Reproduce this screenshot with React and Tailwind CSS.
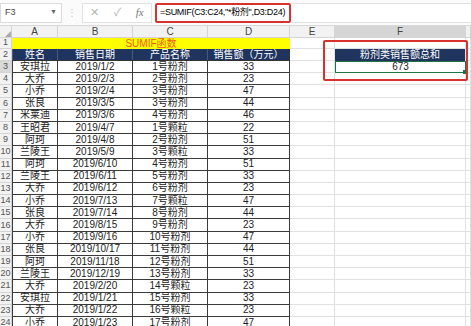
import React from "react";

const data = [
  ["安琪拉", "2019/1/2", "1号粉剂", 33],
  ["大乔", "2019/2/3", "2号粉剂", 23],
  ["小乔", "2019/2/4", "3号粉剂", 47],
  ["张良", "2019/3/5", "3号粉剂", 44],
  ["米莱迪", "2019/3/6", "4号粉剂", 46],
  ["王昭君", "2019/4/7", "1号颗粒", 22],
  ["阿珂", "2019/4/8", "2号粉剂", 51],
  ["兰陵王", "2019/5/9", "3号颗粒", 33],
  ["阿珂", "2019/6/10", "4号粉剂", 51],
  ["兰陵王", "2019/6/11", "5号粉剂", 33],
  ["大乔", "2019/6/12", "6号粉剂", 23],
  ["小乔", "2019/7/13", "7号颗粒", 47],
  ["张良", "2019/7/14", "8号粉剂", 44],
  ["大乔", "2019/8/15", "9号粉剂", 23],
  ["小乔", "2019/9/16", "10号粉剂", 47],
  ["张良", "2019/10/17", "11号粉剂", 44],
  ["阿珂", "2019/11/18", "12号粉剂", 51],
  ["兰陵王", "2019/12/19", "13号粉剂", 33],
  ["大乔", "2019/2/20", "14号颗粒", 23],
  ["安琪拉", "2019/1/21", "15号粉剂", 33],
  ["大乔", "2019/1/22", "16号颗粒", 23],
  ["小乔", "2019/1/23", "17号粉剂", 47],
];

const RowNum = ({ n, active }) => (
  <div
    className={`w-[12px] shrink-0 flex items-center justify-center border-r border-b border-[#d4d4d4] text-[9px] text-[#555] ${
      active ? "bg-[#d9d9d9]" : "bg-[#f2f2f2]"
    }`}
  >
    {n}
  </div>
);

const Blank = ({ w }) => <div className={`${w} shrink-0 border-r border-b border-[#e1e1e1]`} />;

const App = () => {
  return (
    <div className="relative w-[471px] h-[326px] overflow-hidden bg-white text-[#222] font-['Liberation_Sans','Noto_Sans_CJK_SC',sans-serif]">
      {/* formula bar */}
      <div className="flex items-center h-[26px] border-b border-[#d8d8d8] bg-[#fbfbfb]">
        <div className="w-[62px] h-[20px] flex items-center justify-between px-1 bg-white border border-[#dcdcdc] text-[9px] text-[#444]">
          <span>F3</span>
          <span className="text-[7px] text-[#666]">▼</span>
        </div>
        <div className="w-[20px] text-center text-[10px] text-[#c4c4c4]">⋮</div>
        <div className="w-[70px] h-[20px] flex items-center justify-around bg-white border border-[#e2e2e2] text-[11px] text-[#b5b5b5]">
          <span>✕</span>
          <span>✓</span>
          <span className="italic font-['Liberation_Serif',serif] text-[#777]">fx</span>
        </div>
        <div className="ml-[3px] w-[136px] h-[20px] flex items-center px-[3px] bg-white border-2 border-[#d8322e] rounded-[2px] text-[9px] tracking-[-0.3px] text-black whitespace-nowrap overflow-hidden">
          =SUMIF(C3:C24,"*粉剂",D3:D24)
        </div>
        <div className="flex-1 h-[20px] bg-white border-y border-[#e2e2e2]" />
      </div>

      {/* column letters */}
      <div className="flex h-[12px] bg-[#f2f2f2] text-[10px] text-[#444]">
        <div className="w-[12px] shrink-0 border-r border-b border-[#d4d4d4] flex items-end justify-end">
          <span className="text-[6px] text-[#aaa] leading-none">◢</span>
        </div>
        {[
          ["A", "w-[46px]"],
          ["B", "w-[75px]"],
          ["C", "w-[75px]"],
          ["D", "w-[82px]"],
          ["E", "w-[45px]"],
          ["F", "w-[131px]"],
          ["", "flex-1"],
        ].map(([l, w]) => (
          <div
            key={l}
            className={`${w} shrink-0 flex items-center justify-center border-r border-b border-[#d4d4d4] leading-none ${
              l === "F" ? "bg-[#d6d6d6]" : ""
            }`}
          >
            {l}
          </div>
        ))}
      </div>

      {/* row 1 */}
      <div className="flex h-[11px]">
        <RowNum n={1} />
        <div className="w-[278px] shrink-0 flex items-center justify-center bg-[#ffff00] text-[10px] leading-none text-[#f05a14]">
          SUMIF函数
        </div>
        <Blank w="w-[45px]" />
        <Blank w="w-[131px]" />
        <Blank w="flex-1" />
      </div>

      {/* row 2 headers */}
      <div className="flex h-[12px]">
        <RowNum n={2} />
        <div className="flex shrink-0 bg-[#1f3560] text-white text-[10px] leading-none border-b border-[#333]">
          <div className="w-[46px] flex items-center justify-center border-x border-[#4b5a7a]">姓名</div>
          <div className="w-[75px] flex items-center justify-center border-r border-[#4b5a7a]">销售日期</div>
          <div className="w-[75px] flex items-center justify-center border-r border-[#4b5a7a]">产品名称</div>
          <div className="w-[82px] flex items-center justify-center border-r border-[#333]">销售额（万元）</div>
        </div>
        <Blank w="w-[45px]" />
        <div className="w-[131px] shrink-0 flex items-center justify-center bg-[#1f3560] text-white text-[10px] leading-none border-r border-[#e1e1e1]">
          粉剂类销售额总和
        </div>
        <Blank w="flex-1" />
      </div>

      {/* data rows */}
      {data.map((r, i) => {
        const n = i + 3;
        return (
          <div key={n} className="flex h-[12.2px] text-[10px] leading-none">
            <RowNum n={n} active={n === 3} />
            <div className="flex shrink-0 border-b border-[#3a3a3a]">
              <div className="w-[46px] flex items-center justify-center border-x border-[#3a3a3a]">{r[0]}</div>
              <div className="w-[75px] flex items-center justify-center border-r border-[#3a3a3a]">{r[1]}</div>
              <div className="w-[75px] flex items-center justify-center border-r border-[#3a3a3a]">{r[2]}</div>
              <div className="w-[82px] flex items-center justify-center border-r border-[#3a3a3a]">{r[3]}</div>
            </div>
            <Blank w="w-[45px]" />
            {n === 3 ? (
              <div className="relative w-[131px] shrink-0 flex items-center justify-center border border-[#217346]">
                673
                <span className="absolute -right-[2px] -bottom-[2px] w-[4px] h-[4px] bg-[#217346]" />
              </div>
            ) : (
              <Blank w="w-[131px]" />
            )}
            <Blank w="flex-1" />
          </div>
        );
      })}

      {/* annotation box */}
      <div className="absolute left-[323px] top-[40px] w-[145px] h-[41px] border-2 border-[#d8322e] rounded-[2px]" />
    </div>
  );
};

export default App;
